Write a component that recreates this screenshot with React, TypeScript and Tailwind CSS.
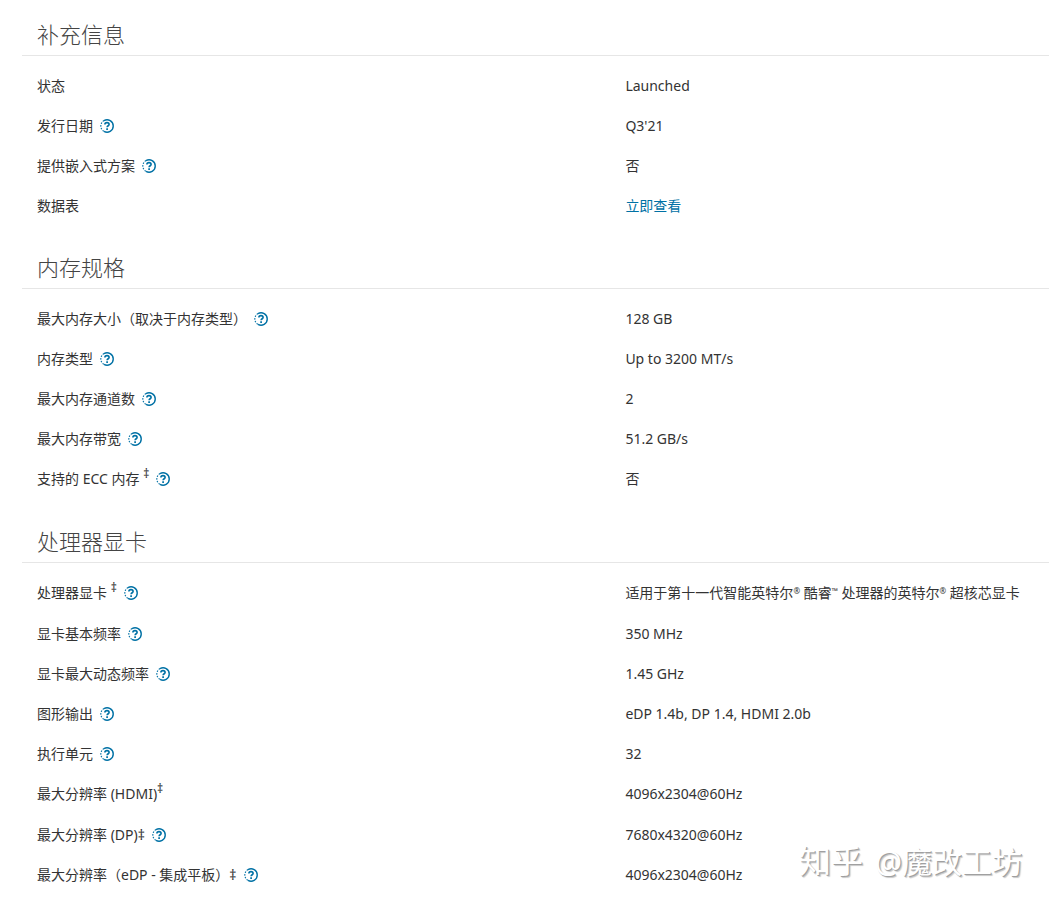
import React from 'react';

interface Spec {
  label: string;
  // footnote mark raised above the label
  mark?: boolean;
  help?: boolean;
  value: React.ReactNode;
}

interface Section {
  title: string;
  specs: Spec[];
}

const Tm: React.FC<{ children: string }> = ({ children }) => (
  <sup className="-top-1 align-baseline text-[8px] leading-none">{children}</sup>
);

const sections: Section[] = [
  {
    title: '补充信息',
    specs: [
      { label: '状态', value: 'Launched' },
      { label: '发行日期', help: true, value: "Q3'21" },
      { label: '提供嵌入式方案', help: true, value: '否' },
      {
        label: '数据表',
        value: <a href="#datasheet" className="text-[#0071a5] hover:underline">立即查看</a>,
      },
    ],
  },
  {
    title: '内存规格',
    specs: [
      { label: '最大内存大小（取决于内存类型）', help: true, value: '128 GB' },
      { label: '内存类型', help: true, value: 'Up to 3200 MT/s' },
      { label: '最大内存通道数', help: true, value: '2' },
      { label: '最大内存带宽', help: true, value: '51.2 GB/s' },
      { label: '支持的 ECC 内存 ', mark: true, help: true, value: '否' },
    ],
  },
  {
    title: '处理器显卡',
    specs: [
      {
        label: '处理器显卡 ',
        mark: true,
        help: true,
        value: <>适用于第十一代智能英特尔<Tm>®</Tm> 酷睿<Tm>™</Tm> 处理器的英特尔<Tm>®</Tm> 超核芯显卡</>,
      },
      { label: '显卡基本频率', help: true, value: '350 MHz' },
      { label: '显卡最大动态频率', help: true, value: '1.45 GHz' },
      { label: '图形输出', help: true, value: 'eDP 1.4b, DP 1.4, HDMI 2.0b' },
      { label: '执行单元', help: true, value: '32' },
      { label: '最大分辨率 (HDMI)', mark: true, value: '4096x2304@60Hz' },
      { label: '最大分辨率 (DP)‡', help: true, value: '7680x4320@60Hz' },
      { label: '最大分辨率（eDP - 集成平板）‡', help: true, value: '4096x2304@60Hz' },
    ],
  },
];

const HelpIcon: React.FC = () => (
  <svg viewBox="0 0 14 14" className="h-[14px] w-[14px]" fill="none" stroke="#0071a5">
    <path d="M4 1.6A6.2 6.2 0 1 1 4 12.4" strokeWidth="1.4" />
    <path d="M4 1.6A6.2 6.2 0 0 0 4 12.4" strokeWidth="1.2" strokeDasharray="1.5 1.3" />
    <path d="M4.9 5.5C4.9 4.2 5.8 3.6 7 3.6s2.1.7 2.1 1.8c0 1.3-2 1.4-2 2.9" strokeWidth="1.6" />
    <path d="M7.1 9.3v1.6" strokeWidth="1.7" />
  </svg>
);

const SpecRow: React.FC<{ spec: Spec }> = ({ spec }) => (
  <tr className={spec.mark ? 'h-[41px] *:pb-0.5' : 'h-10'}>
    <th scope="row" className="w-[57%] pl-[15px] text-left font-normal">
      <div className="flex items-center">
        <span>
          {spec.label}
          {spec.mark && <sup className="-top-1.5 align-baseline text-xs leading-none">‡</sup>}
        </span>
        {spec.help && (
          <button type="button" aria-label={`${spec.label.trim()} 说明`} className="ml-[7px] cursor-pointer">
            <HelpIcon />
          </button>
        )}
      </div>
    </th>
    <td className="pl-[18px] whitespace-nowrap">{spec.value}</td>
  </tr>
);

export default function App() {
  return (
    <main className="relative min-h-screen overflow-hidden bg-white pt-[15px] pl-[22px] font-['Noto_Sans','Noto_Sans_CJK_SC',sans-serif] text-sm leading-5 text-[#333333]">
      {sections.map(section => (
        <section key={section.title} className="mb-[22px] last-of-type:mb-0">
          <h2 className="border-b border-[#e6e6e6] pb-0.5 pl-[15px] text-[22px] leading-[38px] font-light text-[#444444]">
            {section.title}
          </h2>
          <table className="mt-[10px] w-full table-fixed border-collapse">
            <tbody>
              {section.specs.map(spec => (
                <SpecRow key={spec.label} spec={spec} />
              ))}
            </tbody>
          </table>
        </section>
      ))}
      <p className="absolute right-[27px] bottom-[23px] flex items-baseline gap-3 text-[30px] leading-10 text-white [text-shadow:1px_1px_0_#a0a0a0,2px_2px_1px_#c8c8c8]">
        <span className="text-[32px]">知乎</span>
        <span>@魔改工坊</span>
      </p>
    </main>
  );
}
